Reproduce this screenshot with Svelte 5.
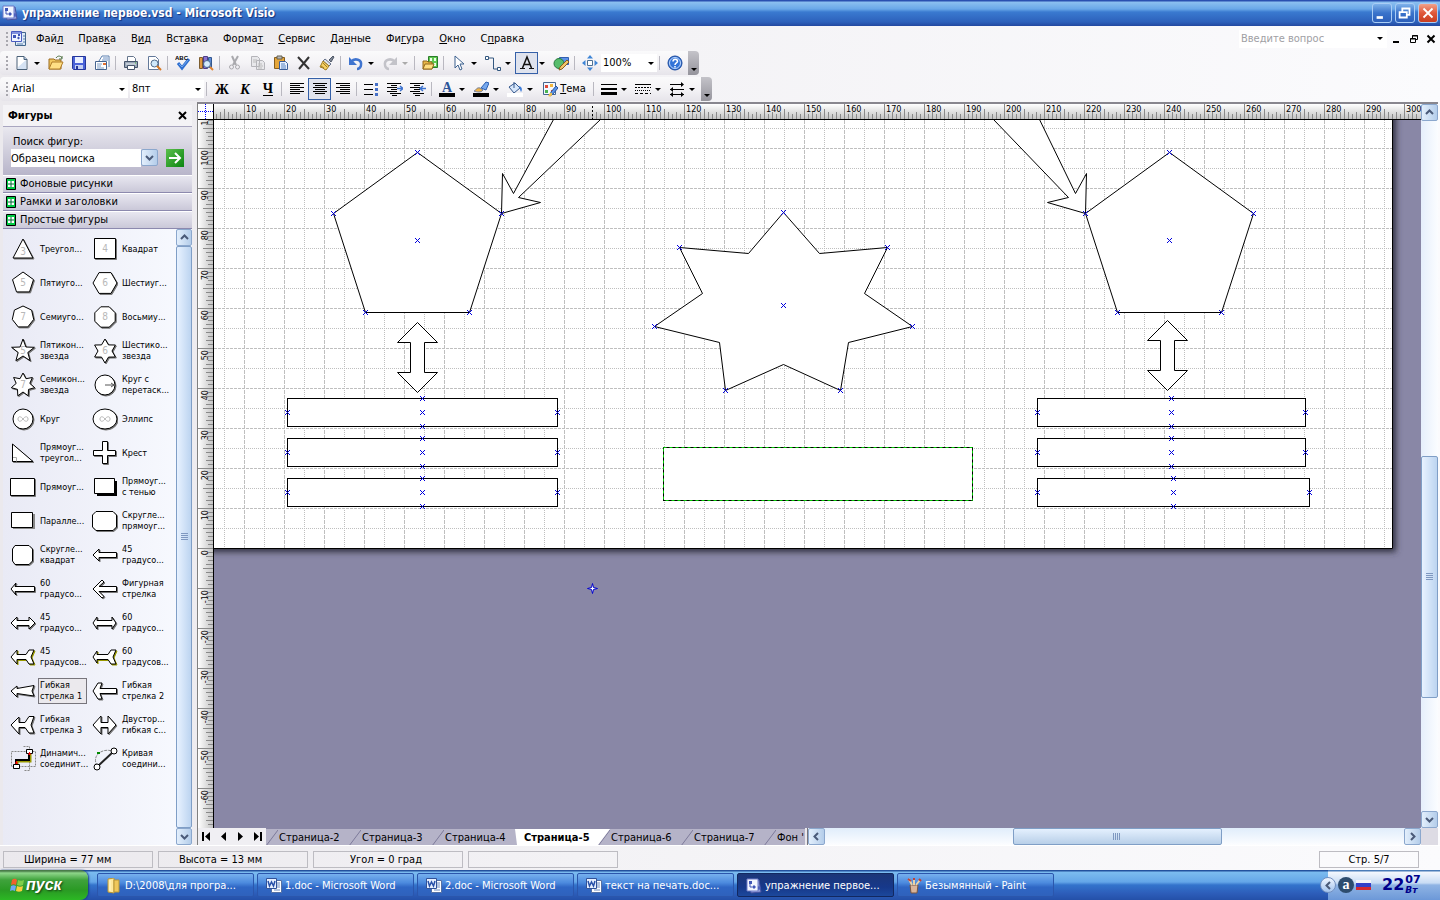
<script lang="ts">
  const menus = [
    ['Фай', 'л', ''], ['Прав', 'к', 'а'], ['В', 'и', 'д'], ['Вст', 'а', 'вка'], ['Форма', 'т', ''],
    ['', 'С', 'ервис'], ['Да', 'н', 'ные'], ['Фи', 'г', 'ура'], ['', 'О', 'кно'], ['С', 'п', 'равка'],
  ];

  type Tool = { icon?: string; label?: string; drop?: boolean; on?: boolean; off?: boolean; sep?: boolean };
  const sep: Tool = { sep: true };

  const standard: Tool[] = [
    { icon: 'new', label: 'Создать', drop: true },
    { icon: 'open', label: 'Открыть' },
    { icon: 'save', label: 'Сохранить' },
    { icon: 'mail', label: 'Сообщение' },
    sep,
    { icon: 'print', label: 'Печать' },
    { icon: 'preview', label: 'Просмотр' },
    sep,
    { icon: 'spell', label: 'Орфография' },
    { icon: 'research', label: 'Справочники' },
    sep,
    { icon: 'cut', label: 'Вырезать', off: true },
    { icon: 'copy', label: 'Копировать', off: true },
    { icon: 'paste', label: 'Вставить' },
    { icon: 'delete', label: 'Удалить' },
    { icon: 'painter', label: 'Формат по образцу' },
    sep,
    { icon: 'undo', label: 'Отменить', drop: true },
    { icon: 'redo', label: 'Вернуть', drop: true, off: true },
    sep,
    { icon: 'stencil', label: 'Фигуры' },
    sep,
    { icon: 'pointer', label: 'Указатель', drop: true },
    { icon: 'connector', label: 'Соединительная линия', drop: true },
    { icon: 'text', label: 'Текст', drop: true, on: true },
    { icon: 'drawing', label: 'Рисование' },
    sep,
    { icon: 'fit', label: 'Панорама' },
  ];

  const formatting: Tool[] = [
    { icon: 'bold', label: 'Полужирный' },
    { icon: 'italic', label: 'Курсив' },
    { icon: 'underline', label: 'Подчеркнутый' },
    sep,
    { icon: 'left', label: 'По левому краю' },
    { icon: 'center', label: 'По центру', on: true },
    { icon: 'right', label: 'По правому краю' },
    sep,
    { icon: 'bullets', label: 'Маркеры' },
    { icon: 'outdent', label: 'Уменьшить отступ' },
    { icon: 'indent', label: 'Увеличить отступ' },
    sep,
    { icon: 'color', label: 'Цвет текста', drop: true },
    { icon: 'line', label: 'Цвет линии', drop: true },
    { icon: 'fill', label: 'Цвет заливки', drop: true },
  ];

  const lineTools: Tool[] = [
    sep,
    { icon: 'weight', label: 'Толщина линии', drop: true },
    { icon: 'pattern', label: 'Тип линии', drop: true },
    { icon: 'ends', label: 'Концы линии', drop: true },
  ];

  const icons: Record<string, string> = {
    new: '<path d="M3 1.500h7l3 3v10H3z" fill="#fff" stroke="#4a6078"/><path d="M4 12l8-7v9H4z" fill="#d5e2f3"/><path d="M10 1.500v3h3" fill="#b9cce6" stroke="#4a6078"/>',
    open: '<path d="M1 4h5l1 1h6v9H1z" fill="#f2c860" stroke="#9a6a20"/><path d="M1 14l3-7h11l-3 7z" fill="#ffdf85" stroke="#b07c28"/><path d="M8 3c2-3 5-2 6 0m0-2v3h-3" fill="none" stroke="#4c7040"/>',
    save: '<path d="M1.500 1.500h13v13h-12l-1-1z" fill="#4a62d8" stroke="#24369a"/><path d="M4 2h8v6H4z" fill="#eaf0ff"/><path d="M4 10h8v4H4z" fill="#c4cff2"/><path d="M5 11h2v3H5z" fill="#24369a"/>',
    mail: '<path d="M5 6l3-5h7v11" fill="#fff" stroke="#5c80b0"/><path d="M9 3h5M8 5h6" stroke="#6c90c4"/><path d="M1.500 6.500h11v8h-11z" fill="#fff" stroke="#46648f"/><path d="M3 9h5M3 11h4M3 13h7" fill="none" stroke="#7d9cc6"/><path d="M9 8h3v2H9z" fill="#e26f30"/>',
    print: '<path d="M4.500 1.500h6l2 2v3h-8z" fill="#fff" stroke="#65758c"/><path d="M1.500 6.500h13v6h-13z" fill="#9ba8b8" stroke="#46546b"/><path d="M3 9h10" stroke="#e8edf4"/><path d="M4.500 10.500h7v4h-7z" fill="#fff" stroke="#46546b"/><path d="M12 8h1" stroke="#42c040"/>',
    preview: '<path d="M2.500 1.500h7l3 3v10h-10z" fill="#fff" stroke="#63799a"/><circle cx="8.500" cy="8.500" r="3.500" fill="#cfe8fa" stroke="#516c8c"/><path d="M11 11l4 4" stroke="#d87822" stroke-width="2"/>',
    spell: '<path d="M3 8l4 5 7-9" fill="none" stroke="#2f6fd0" stroke-width="3"/><path d="M4 9l3 3 6-7" fill="none" stroke="#75a9ee"/><text x="0" y="5" class="tiny">ABC</text>',
    research: '<path d="M1.500 2.500h3v11h-3z" fill="#e19a40" stroke="#7c5d30"/><path d="M5.500 1.500h4v12h-4z" fill="#8c74d0" stroke="#4d3f88"/><path d="M10.500 2.500h3v10h-3z" fill="#5a8bd8" stroke="#34588f"/><circle cx="9" cy="9" r="3.500" fill="#d5edfc" stroke="#45658f"/><path d="M12 12l3 3" stroke="#e08430" stroke-width="2"/>',
    cut: '<path d="M5 1l4 9M11 1L6 10" stroke="#a9a9ad" stroke-width="2"/><circle cx="4.500" cy="12" r="2" fill="none" stroke="#a9a9ad"/><circle cx="10.500" cy="12" r="2" fill="none" stroke="#a9a9ad"/>',
    copy: '<path d="M1.500 1.500h6l2 2v8h-8zM6.500 5.500h6l2 2v7h-8z" fill="#e8e8eb" stroke="#b4b4b9"/><path d="M3 5h4M3 7h3M8 9h4M8 11h5M8 13h4" stroke="#bbb"/>',
    paste: '<path d="M1.500 2.500h10v11h-10z" fill="#e5a63a" stroke="#855e20"/><path d="M4 1h5v3H4z" fill="#b8b8b8" stroke="#65604f"/><path d="M6.500 6.500h6l2 2v6h-8z" fill="#e8f1ff" stroke="#3a5d98"/><path d="M8 9h4M8 11h5M8 13h5" stroke="#5480c0"/>',
    delete: '<path d="M2 2l11 12M13 2L3 14" stroke="#333" stroke-width="2"/>',
    painter: '<path d="M10 5l4-4 1 1-3 5z" fill="#7f8794" stroke="#4f5868"/><path d="M6 4l6 5-2 2-6-5z" fill="#dfe3ea" stroke="#66728a"/><path d="M4 6l6 5-3 4-2-1-1-1-3-1z" fill="#f4cf62" stroke="#a07c22"/><path d="M2 11l3 2M4 8l4 4" stroke="#a07c22"/>',
    undo: '<path d="M3 7c4-5 11-2 10 3 0 2-2 4-4 4" fill="none" stroke="#3f74cf" stroke-width="2.500"/><path d="M1 2v8h8z" fill="#3f74cf"/>',
    redo: '<path d="M13 7c-4-5-11-2-10 3 0 2 2 4 4 4" fill="none" stroke="#c3c3c9" stroke-width="2.500"/><path d="M15 2v8H7z" fill="#c3c3c9"/>',
    stencil: '<path d="M6.500 1.500h9v11h-9z" fill="#61c850" stroke="#2b7c2b"/><path d="M8 3h2v3H8zM12 3h2v3h-2zM12 8h2v3h-2z" fill="#eaffe5"/><path d="M1 6h4l1 1h4v7H1z" fill="#e9b84a" stroke="#93681c"/><path d="M1 14l2-5h9l-2 5z" fill="#ffdd80" stroke="#93681c"/>',
    pointer: '<path d="M4 1v12l3-3 2 5 2-1-2-5h4z" fill="#fff" stroke="#3c618f"/>',
    connector: '<path d="M.5 1.500h3v3h-3zM12.500 12.500h3v3h-3z" fill="#fff" stroke="#33577f"/><path d="M4 3h4.500v11H12" fill="none" stroke="#33577f"/>',
    text: '<path d="M3.500 13L8 2l4.500 11M5 9.500h6" fill="none" stroke="#111" stroke-width="1.500"/><path d="M1 13.500h5M10 13.500h5" stroke="#111"/>',
    drawing: '<path d="M6.500 2.500h9v7h-9z" fill="#5d91e8" stroke="#315fb0"/><circle cx="6" cy="8.500" r="5" fill="#57bd6c" stroke="#287940"/><path d="M6 15l1-3 7-7 2 2-7 7z" fill="#f1c56a" stroke="#875d20"/>',
    fit: '<path d="M5.500 5.500h5v5h-5z" fill="#fff" stroke="#4f7193"/><path d="M8 0L5 3.500h6zM8 16l-3-3.500h6zM0 8l3.500-3v6zM16 8l-3.500-3v6z" fill="#3f86d6"/>',
    help: '<circle cx="8" cy="8" r="7" fill="#3374d8" stroke="#1c4a9c"/><circle cx="8" cy="8" r="5.500" fill="none" stroke="#bcd6fb"/><path d="M6 6.500c0-3 4.500-3 4.500 0 0 1.500-2.500 1.500-2.500 3.500M8 11v1.500" fill="none" stroke="#fff" stroke-width="1.500"/>',
    bold: '<text x="8" y="13" class="glyph heavy">Ж</text>',
    italic: '<text x="8" y="13" class="glyph heavy slant">К</text>',
    underline: '<text x="8" y="12" class="glyph heavy">Ч</text><path d="M3 14.500h10" stroke="#000"/>',
    left: '<path d="M1 2.500h14M1 4.500h10M1 6.500h14M1 8.500h10M1 10.500h14M1 12.500h10" stroke="#000"/>',
    center: '<path d="M1 2.500h14M3 4.500h10M1 6.500h14M3 8.500h10M1 10.500h14M3 12.500h10" stroke="#000"/>',
    right: '<path d="M1 2.500h14M5 4.500h10M1 6.500h14M5 8.500h10M1 10.500h14M5 12.500h10" stroke="#000"/>',
    bullets: '<path d="M0 3.500h9M0 8.500h9M0 13.500h9" stroke="#000"/><path d="M11 2h3v3h-3zM11 7h3v3h-3zM11 12h3v3h-3z" fill="#4670c8"/>',
    outdent: '<path d="M0 2.500h14M4 4.500h6M0 6.500h10M4 8.500h6M0 10.500h10M3 12.500h11M5 14.500h5" stroke="#000"/><path d="M10 7.500h5M13 5l3 2.500-3 2.500" fill="none" stroke="#3f74cf" stroke-width="1.500"/>',
    indent: '<path d="M0 2.500h14M4 4.500h6M0 6.500h10M4 8.500h6M0 10.500h10M3 12.500h11M5 14.500h5" stroke="#000"/><path d="M11 7.500h5M13 5l-3 2.500 3 2.500" fill="none" stroke="#3f74cf" stroke-width="1.500"/>',
    color: '<text x="8" y="11" class="glyph heavy blue">А</text><path d="M0 12h16v4H0z"/>',
    line: '<path d="M8 7l5-6 3 1-3 7z" fill="#76a8ee" stroke="#2a5db0"/><path d="M1 10c2 0 2-4 6-3l3 2c-2 3-6 2-9 1z" fill="#eeb24a" stroke="#6f7fa0"/><path d="M0 12h16v4H0z"/>',
    fill: '<path d="M2 6l6-4 5 5-6 5z" fill="#d7e7fb" stroke="#36588c"/><path d="M7 1v6" stroke="#36588c"/><path d="M12 5c4 1 3 5 2 6-1-2-1-3-2-6z" fill="#3f7edb"/><path d="M0 12h16v4H0z" fill="#fff"/>',
    theme: '<path d="M1.500 1.500h12v12h-12z" fill="#f4f8ff" stroke="#47668f"/><path d="M3 4h3v3H3zM9 9h3v3H9z" fill="#e04a3a"/><path d="M8 3h3v3H8z" fill="#f3b73c"/><path d="M3 9h3v3H3z" fill="#4ab552"/><path d="M8 15l1-4 5-6 2 2-5 6z" fill="#5c94e8" stroke="#29549e"/><path d="M6 15c1 0 1-4 4-3 1 3-2 4-4 3z" fill="#f0c24f"/>',
    weight: '<path d="M0 3.500h16" stroke="#000"/><path d="M0 8h16" stroke="#000" stroke-width="2"/><path d="M0 12.500h16" stroke="#000" stroke-width="3"/>',
    pattern: '<path d="M0 3.500h16" stroke="#000"/><path d="M0 6.500h16" stroke="#000" stroke-dasharray="2 1"/><path d="M0 9.500h16" stroke="#000" stroke-dasharray="1 1"/><path d="M0 12.500h16" stroke="#000" stroke-dasharray="3 2"/>',
    ends: '<path d="M1 3.500h13M1 8.500h14M1 13.500h14" stroke="#000"/><path d="M12 1v5l3-2.500zM4 6v5L1 8.500zM4 11v5l-3-2.500zM12 11v5l3-2.500z"/>',
    folder: '<path d="M2 1l6-1v15l-6-1z" fill="#ffe89b" stroke="#b99636"/><path d="M8 2h5v12H8z" fill="#efc75b" stroke="#b99636"/><path d="M4 2v11" stroke="#fff6ca"/>',
    word: '<path d="M5.500 2.500h10v12h-10z" fill="#fff" stroke="#5570a4"/><path d="M10 5h4M10 7h4M10 9h4M8 12h6" stroke="#6c8ac0"/><path d="M.5.500h10v10H.5z" fill="#e8f0ff" stroke="#305299"/><path d="M2 3l1.500 5L5.500 4l2 4L9 3" fill="none" stroke="#2750a8" stroke-width="1.500"/>',
    doc: '<path d="M4.500 1.500h10v13h-10z" fill="#dfeaf8" stroke="#41658c"/><path d="M12 5h2M12 8h2M12 11h2M6 13h6" stroke="#5d80ac"/><path d="M.5.500h10v10H.5z" fill="#f2f5ff" stroke="#4a5bc0"/><path d="M1 1h9v2H1z" fill="#8493de"/><path d="M2 4h3v3H2zM7 3h2v2H7zM6 7l1.500-1.500L9 7 7.500 8.500z" fill="#3f55b7"/>',
    visio: '<path d="M3 4l10-2 2 12-10 1z" fill="#97a2dc" stroke="#4552a0"/><path d="M1 1h11v12H1z" fill="#f2f5ff" stroke="#6c7bc8"/><path d="M3 3h3v3H3z" fill="#3f55b7"/><path d="M8 7l2 2-2 2-2-2z" fill="#3f55b7"/><path d="M4 6v3h2M12 10h3M13 8v4" fill="none" stroke="#3f55b7"/>',
    paint: '<path d="M4 7h8l-1 8H5z" fill="#d8b49a" stroke="#775540"/><path d="M6 7L3 1M8 7V1M10 7l4-5" stroke="#e8d2a8" stroke-width="2"/><path d="M2 1l3 2M7 1h2M13 1l2 2" stroke="#c44235" stroke-width="2"/>',
  };

  // stencil masters, drawn in a 26x26 box
  const solid = (d: string, shade = '#777') => `<path d="${d}" transform="translate(1 1)" stroke="${shade}" fill="${shade}"/><path d="${d}" fill="#fff" stroke="#000"/>`;
  const num = (n: string, y = 16) => `<text x="13" y="${y}" class="num">${n}</text>`;
  const loop = '<path d="M13 13c-2-3-5-3-5 0s3 3 5 0 5-3 5 0-3 3-5 0" fill="none" stroke="#b8b8b8"/>';
  const poly = (n: number, r: number, inner = 0, rot = -90) => {
    const count = inner ? n * 2 : n;
    let d = '';
    for (let i = 0; i < count; i++) {
      const a = ((rot + (360 / count) * i) * Math.PI) / 180;
      const rad = inner && i % 2 ? inner : r;
      d += `${i ? 'L' : 'M'}${(13 + rad * Math.cos(a)).toFixed(1)} ${(13 + rad * Math.sin(a)).toFixed(1)}`;
    }
    return d + 'z';
  };

  const masters = [
    { name: ['Треугол...'], art: solid('M13 3L23 22H3z') + num('3', 19) },
    { name: ['Квадрат'], art: solid('M2.500 2.500h21v20h-21z') + num('4') },
    { name: ['Пятиуго...'], art: solid(poly(5, 11)) + num('5') },
    { name: ['Шестиуг...'], art: solid(poly(6, 12, 0, 0)) + num('6') },
    { name: ['Семиуго...'], art: solid(poly(7, 11)) + num('7') },
    { name: ['Восьмиу...'], art: solid(poly(8, 11, 0, 22.5)) + num('8') },
    { name: ['Пятикон...', 'звезда'], art: solid(poly(5, 12, 5)) + num('5') },
    { name: ['Шестико...', 'звезда'], art: solid(poly(6, 12, 7)) + num('6') },
    { name: ['Семикон...', 'звезда'], art: solid(poly(7, 12, 7)) + num('7') },
    { name: ['Круг с', 'перетаск...'], art: solid('M3 13a10 10 0 1 0 20 0a10 10 0 1 0-20 0z') + '<path d="M13 13h9M19 11l3 2-3 2" fill="none" stroke="#555"/>' },
    { name: ['Круг'], art: solid('M3 13a10 10 0 1 0 20 0a10 10 0 1 0-20 0z') + loop },
    { name: ['Эллипс'], art: solid('M1 13a12 10 0 1 0 24 0a12 10 0 1 0-24 0z') + loop },
    { name: ['Прямоуг...', 'треугол...'], art: solid('M2.500 4v17.500H23z') + '<path d="M3 17.500h3.500v4" fill="none" stroke="#aaa"/>' },
    { name: ['Крест'], art: solid('M10.500 1.500h5v9h8v5h-8v8h-5v-8h-9v-5h9z') },
    { name: ['Прямоуг...'], art: solid('M.5 4.500h24v17H.5z') },
    { name: ['Прямоуг...', 'с тенью'], art: '<path d="M5 7h20v15H5z" fill="#000"/><path d="M2.500 4.500h20v15h-20z" fill="#fff" stroke="#000"/>' },
    { name: ['Паралле...'], art: '<path d="M3 6h22v15H3z" fill="#888"/><path d="M1.500 4.500h21v15h-21z" fill="#fff" stroke="#000"/>' },
    { name: ['Скругле...', 'прямоуг...'], art: solid('M4 3.500h17l3.500 3.500v12L21 22.500H4L.5 19V7z') },
    { name: ['Скругле...', 'квадрат'], art: solid('M5 3.500h14l3.500 3.500v12l-3.500 3.500H5L2.500 19V7z') },
    { name: ['45', 'градусо...'], art: solid('M1 13l6-6v3.500h17.500v5H7V19z') },
    { name: ['60', 'градусо...'], art: solid('M1 13l5-6-1 3.500h19.500v5H5l1 3.500z') },
    { name: ['Фигурная', 'стрелка'], art: solid('M1 13l9-9 2 2-5 4.500h17.500v5H7l5 5-2 1.500z') },
    { name: ['45', 'градусо...'], art: solid('M1 13l6-6v3.500h12V7l6 6-6 6v-3.500H7V19z') },
    { name: ['60', 'градусо...'], art: solid('M1 13l4-6v3.500h15V7l4 6-4 6v-3.500H5V19z') },
    { name: ['45', 'градусов...'], art: solid('M1 13l6-7v4.500h9l3-4.500h5l-3 7 3 7h-5l-3-4.500H7V20z', '#990') },
    { name: ['60', 'градусов...'], art: solid('M1 13l4-6v3.500h11l3-4.500h5l-3 7 3 7h-5l-3-4.500H5V19z', '#990') },
    { name: ['Гибкая', 'стрелка 1'], art: solid('M1 13l6-5v2.500l17-3-2 5.500 2 5-17-2.500V19z'), on: true },
    { name: ['Гибкая', 'стрелка 2'], art: solid('M1 13l5-8h4l-2 5.500h16.500v5H8l2 5.500H6z') },
    { name: ['Гибкая', 'стрелка 3'], art: solid('M1 13l8-8v5.500h6l4-6h5l-3 8.500 3 8h-5l-4-5.500H9V22z') },
    { name: ['Двустор...', 'гибкая с...'], art: solid('M1 13l8-9v6.500h7V4l8 9-8 9v-6.500H9V22z') },
    { name: ['Динамич...', 'соединит...'], art: '<path d="M1.500 5.500h24v15h-24zM13.500.500h6v24h-6" fill="none" stroke="#888" stroke-dasharray="2 1"/><path d="M7 21v-6h13V8" fill="none" stroke="#990" stroke-width="3"/><path d="M6 20v-6h13V7" fill="none" stroke="#000" stroke-width="2"/><path d="M16.500 3.500h6v4h-6zM3.500 18.500h6v4h-6z" fill="#fff" stroke="#000"/><path d="M18 8h3M19.500 6v3M5 17h3M6.500 15v3" stroke="red"/>' },
    { name: ['Кривая', 'соедини...'], art: '<path d="M5 20C-1 8 12 2 20 5" fill="none" stroke="#888" stroke-dasharray="3 1"/><path d="M6 20L21 6" stroke="#222" stroke-width="2"/><circle cx="22" cy="5" r="3" fill="#fff" stroke="#000"/><circle cx="5" cy="21" r="3" fill="#fff" stroke="#000"/><path d="M5 6h3v2H5z" fill="#080"/>' },
  ];

  const stencils = ['Фоновые рисунки', 'Рамки и заголовки', 'Простые фигуры'];
  const pages = ['Страница-2', 'Страница-3', 'Страница-4', 'Страница-5', 'Страница-6', 'Страница-7', "Фон '"];
  const status = ['Ширина = 77 мм', 'Высота = 13 мм', 'Угол = 0 град', ''];
  const tasks = [
    { icon: 'folder', text: 'D:\\2008\\для програ...' },
    { icon: 'word', text: '1.doc - Microsoft Word' },
    { icon: 'word', text: '2.doc - Microsoft Word' },
    { icon: 'word', text: 'текст на печать.doc...' },
    { icon: 'visio', text: 'упражнение первое...', on: true },
    { icon: 'paint', text: 'Безымянный - Paint' },
  ];

  let active = $state('Страница-5');
  let search = $state('Образец поиска');

  // rulers: 4px per millimetre, zero of the sheet lies at (-10, 428) of the canvas
  const hTicks = Array.from({ length: 304 }, (_, i) => ({ v: i, at: i * 4 - 10 })).filter((t) => t.at > 0);
  const vTicks = Array.from({ length: 180 }, (_, i) => ({ v: 110 - i, at: i * 4 - 12 }));
  const tickLength = (v: number) => (v % 10 === 0 ? 16 : v % 5 === 0 ? 11 : v % 2 === 0 ? 8 : 6);

  const gridX = Array.from({ length: 59 }, (_, i) => 10 + i * 20 + 0.5);
  const gridY = Array.from({ length: 21 }, (_, i) => 8 + i * 20 + 0.5);

  const pentagon = [[0, 0], [84, 61], [52, 160], [-52, 160], [-84, 61]];
  const star = [
    [569, 92], [605, 133], [673, 127], [650, 173], [698, 206], [634, 222], [626, 270],
    [569, 244], [511, 270], [505, 222], [440, 206], [488, 173], [465, 127], [534, 133],
  ];
  const bars = [
    { x: 73, y: 278, w: 270 }, { x: 73, y: 318, w: 270 }, { x: 73, y: 358, w: 270 },
    { x: 823, y: 278, w: 268 }, { x: 823, y: 318, w: 268 }, { x: 823, y: 358, w: 272 },
  ];
  const join = (points: number[][], dx = 0, dy = 0) => points.map(([x, y]) => `${x + dx},${y + dy}`).join(' ');

  // connection points, on the outer tips only
  const marks = [
    ...[203, 955].flatMap((cx) => [...pentagon.map(([x, y]) => [x + cx, y + 32]), [cx, 120]]),
    ...star.filter((_, i) => i % 2 === 0),
    [569, 185],
    ...bars.flatMap(({ x, y, w }) => [
      [x, y + 14], [x + w, y + 14], [x + w / 2, y], [x + w / 2, y + 14], [x + w / 2, y + 28],
    ]),
  ];
</script>

{#snippet icon(name: string)}
  <svg class="icon" viewBox="0 0 16 16" aria-hidden="true">{@html icons[name]}</svg>
{/snippet}

{#snippet tools(items: Tool[])}
  {#each items as t}
    {#if t.sep}
      <span class="sep"></span>
    {:else}
      <button class="tool" class:on={t.on} disabled={t.off} aria-label={t.label}>{@render icon(t.icon ?? '')}</button>
      {#if t.drop}
        <button class="drop" disabled={t.off} aria-label={t.label}><i class="caret"></i></button>
      {/if}
    {/if}
  {/each}
{/snippet}

{#snippet chevron(dir: string)}
  <svg class="chevron {dir}" viewBox="0 0 9 9" aria-hidden="true"><path d="M1 6l3.500-3.500L8 6" /></svg>
{/snippet}

<div class="app">
  <header class="title">
    {@render icon('visio')}
    <h1>упражнение первое.vsd - Microsoft Visio</h1>
    <div class="title-buttons">
      <button aria-label="Свернуть"><svg viewBox="0 0 20 20"><path d="M4 15h7" stroke-width="3" /></svg></button>
      <button aria-label="Восстановить"><svg viewBox="0 0 20 20"><path d="M4 9h8v6H4zM7 8V5h8v7h-3" /></svg></button>
      <button class="close" aria-label="Закрыть"><svg viewBox="0 0 20 20"><path d="M5 5l10 10M15 5L5 15" /></svg></button>
    </div>
  </header>

  <nav class="menu">
    <span class="grip"></span>
    {@render icon('doc')}
    {#each menus as [before, key, after]}
      <button>{before}<u>{key}</u>{after}</button>
    {/each}
    <div class="ask">
      <input placeholder="Введите вопрос" aria-label="Введите вопрос" />
      <button class="drop" aria-label="Список вопросов"><i class="caret"></i></button>
    </div>
    <div class="child-buttons">
      <button aria-label="Свернуть окно"><svg viewBox="0 0 10 10"><path d="M1 8h6" stroke-width="2" /></svg></button>
      <button aria-label="Восстановить окно"><svg viewBox="0 0 10 10"><path d="M1.500 4.500h5v4h-5zM1 5h6M3.500 4V1.500h5v4H7M3 2h6" /></svg></button>
      <button aria-label="Закрыть окно"><svg viewBox="0 0 10 10"><path d="M1.500 1.500l7 7M8.500 1.500l-7 7" stroke-width="2" /></svg></button>
    </div>
  </nav>

  <div class="toolbar">
    <span class="grip"></span>
    {@render tools(standard)}
    <label class="combo zoom">
      <select aria-label="Масштаб"><option>100%</option></select>
      <i class="caret"></i>
    </label>
    <span class="sep"></span>
    <button class="tool" aria-label="Справка">{@render icon('help')}</button>
    <button class="more" aria-label="Параметры панели"><i class="caret"></i></button>
  </div>

  <div class="toolbar">
    <span class="grip"></span>
    <label class="combo font">
      <select aria-label="Шрифт"><option>Arial</option></select>
      <i class="caret"></i>
    </label>
    <label class="combo size">
      <select aria-label="Размер шрифта"><option>8пт</option></select>
      <i class="caret"></i>
    </label>
    <span class="sep"></span>
    {@render tools(formatting)}
    <button class="tool theme">{@render icon('theme')}<span><u>Т</u>ема</span></button>
    {@render tools(lineTools)}
    <button class="more" aria-label="Параметры панели"><i class="caret"></i></button>
  </div>

  <main class="workspace">
    <aside class="shapes">
      <div class="shapes-head">
        <h2>Фигуры</h2>
        <button aria-label="Закрыть"><svg viewBox="0 0 9 9"><path d="M1 1l7 7M8 1L1 8" /></svg></button>
      </div>
      <form class="search" onsubmit={(e) => e.preventDefault()}>
        <label for="search">Поиск фигур:</label>
        <div class="search-row">
          <input id="search" bind:value={search} />
          <button type="button" class="xp" aria-label="Показать список">{@render chevron('down')}</button>
          <button class="go" aria-label="Найти"><svg viewBox="0 0 18 18"><path d="M3 9h11M9 4l5 5-5 5" /></svg></button>
        </div>
      </form>
      {#each stencils as s}
        <button class="stencil">
          <svg viewBox="0 0 10 12" aria-hidden="true"><path d="M.5.500h9v11h-9z" fill="#0c4" stroke="#000" /><path d="M2 3h6v6H2z" fill="#fff" /><path d="M5 3v6M2 6h6" stroke="#063" /></svg>
          {s}
        </button>
      {/each}
      <div class="shapes-body">
        <ul class="masters">
          {#each masters as m}
            <li class:on={m.on}>
              <svg viewBox="0 0 26 26" aria-hidden="true">{@html m.art}</svg>
              <span>{#each m.name as part, i}{#if i}<br />{/if}{part}{/each}</span>
            </li>
          {/each}
        </ul>
        <div class="scroll vertical">
          <button class="xp" aria-label="Вверх">{@render chevron('up')}</button>
          <div class="track"><div class="thumb whole"></div></div>
          <button class="xp" aria-label="Вниз">{@render chevron('down')}</button>
        </div>
      </div>
    </aside>

    <section class="drawing">
      <svg class="corner" aria-hidden="true"><path d="M0 7.500h15M7.500 0v15" stroke="#00f" stroke-dasharray="1 1" /></svg>
      <svg class="ruler top" aria-hidden="true">
        <defs>
          <linearGradient id="rule-top" x2="0" y2="1"><stop stop-color="#fff" /><stop offset="1" stop-color="#c4c4c4" /></linearGradient>
        </defs>
        <rect width="100%" height="100%" fill="url(#rule-top)" />
        {#each hTicks as { v, at }}
          <path d="M{at + 0.5} 16v-{tickLength(v)}" />
          {#if v % 10 === 0}<text x={at + 2} y="8">{v}</text>{/if}
        {/each}
        <path class="cursor-tick" d="M378.500 2v13" />
      </svg>
      <div class="scroll vertical main-scroll">
        <button class="xp" aria-label="Вверх">{@render chevron('up')}</button>
        <div class="track"><div class="before"></div><div class="thumb page"></div><div class="after"></div></div>
        <button class="xp" aria-label="Вниз">{@render chevron('down')}</button>
      </div>
      <svg class="ruler side" aria-hidden="true">
        <defs>
          <linearGradient id="rule-side"><stop stop-color="#fff" /><stop offset="1" stop-color="#c4c4c4" /></linearGradient>
        </defs>
        <rect width="100%" height="100%" fill="url(#rule-side)" />
        {#each vTicks as { v, at }}
          <path d="M16 {at + 0.5}h-{tickLength(v)}" />
          {#if v % 10 === 0}<text transform="translate(10 {at + 2}) rotate(-90)" text-anchor="end">{v}</text>{/if}
        {/each}
      </svg>
      <svg class="canvas" role="img" aria-label="Чертеж">
        <defs>
          <filter id="soft" x="-5%" y="-5%" width="110%" height="110%"><feGaussianBlur stdDeviation="3" /></filter>
        </defs>
        <path d="M-20-20H1182V432H-20z" fill="#33313f" filter="url(#soft)" />
        <path d="M-1-1H1178.500V428.500H-1z" fill="#fff" stroke="#000" />
        <g class="grid">
          {#each gridX as x, i}
            <path d="M{x} 0V428" stroke-dasharray={i % 2 ? '4 1' : '1 1'} />
          {/each}
          {#each gridY as y, i}
            <path d="M0 {y}H1178" stroke-dasharray={i % 2 ? '3 1' : '1 1'} />
          {/each}
        </g>
        <g class="figures" transform="translate(.5 .5)">
          <polygon points={join(pentagon, 203, 32)} />
          <polygon points={join(pentagon, 955, 32)} />
          <path d="M339-1L299 73 288 53 287 93 326 82 304 77 386-1M779-1L854 77 833 82 871 93 872 53 861 73 825-1" />
          {#each [[203, 202], [953, 200]] as [x, y]}
            <path d="M{x} {y}l20 20h-13v30h13l-20 20-20-20h13v-30h-13z" />
          {/each}
          <polygon points={join(star)} />
          {#each bars as b}
            <rect x={b.x} y={b.y} width={b.w} height="28" />
          {/each}
          <rect x="449" y="327" width="309" height="53" />
          <rect class="selected" x="449" y="327" width="309" height="53" />
        </g>
        {#each marks as [x, y]}
          <path class="mark" d="M{x - 2} {y - 2}l5 5m0-5l-5 5" />
        {/each}
        <path d="M378.500 463.500l1 4 4 1-4 1-1 4-1-4-4-1 4-1z" fill="#fff" stroke="#00c" />
      </svg>
      <div class="tabs">
        <div class="tab-nav">
          <button aria-label="Первая"><svg viewBox="0 0 9 9"><path d="M0 0h2v9H0zM8 0v9L3 4.500z" /></svg></button>
          <button aria-label="Назад"><svg viewBox="0 0 9 9"><path d="M7 0v9L2 4.500z" /></svg></button>
          <button aria-label="Вперед"><svg viewBox="0 0 9 9"><path d="M2 0v9l5-4.500z" /></svg></button>
          <button aria-label="Последняя"><svg viewBox="0 0 9 9"><path d="M7 0h2v9H7zM1 0v9l5-4.500z" /></svg></button>
        </div>
        <div class="tab-list">
          {#each pages as p}
            <button class="tab" class:active={p === active} onclick={() => (active = p)}>
              <svg viewBox="0 0 12 17" aria-hidden="true"><path d="M0 17L12 1" /></svg>
              <span>{p}</span>
            </button>
          {/each}
        </div>
        <span class="splitter"></span>
        <div class="scroll horizontal">
          <button class="xp" aria-label="Влево">{@render chevron('left')}</button>
          <div class="track"><div class="before"></div><div class="thumb wide"></div><div class="after"></div></div>
          <button class="xp" aria-label="Вправо">{@render chevron('right')}</button>
        </div>
      </div>
    </section>
  </main>

  <div class="status">
    {#each status as s}
      <span class="cell">{s}</span>
    {/each}
    <span class="cell page-no">Стр. 5/7</span>
  </div>

  <footer class="taskbar">
    <button class="start">
      <svg viewBox="0 0 16 16" aria-hidden="true">
        <path d="M2 3c2-2 4-1 5 0L6 8C4 7 3 7 1 8z" fill="#f2602c" /><path d="M8 3c2 1 4 1 6 0l-1 5c-2 1-4 1-6 0z" fill="#7ed04a" />
        <path d="M1 9c2-1 3-1 5 0l-1 5c-2-1-3-1-5 0z" fill="#6fa6f8" /><path d="M7 9c2 1 4 1 6 0l-1 5c-2 1-4 1-6 0z" fill="#f8cf3e" />
      </svg>
      пуск
    </button>
    {#each tasks as t}
      <button class="task" class:on={t.on}>{@render icon(t.icon)}<span>{t.text}</span></button>
    {/each}
    <div class="tray">
      <button class="hide" aria-label="Скрыть значки">{@render chevron('left')}</button>
      <span class="agent">a</span>
      <svg class="flag" viewBox="0 0 15 12" aria-hidden="true"><path d="M0 1h15v4H0z" fill="#f4f4f8" /><path d="M0 4h15v4H0z" fill="#3440c8" /><path d="M0 8h15v3H0z" fill="#d42a30" /></svg>
      <time>
        <b>22</b>
        <span><b>07</b><i>Вт</i></span>
      </time>
    </div>
  </footer>
</div>

<style>
  :global(body) {
    margin: 0;
  }

  .app {
    background: linear-gradient(90deg, #ebe9ed, #f3f2f5 40%, #fbfbfd);
    color: #000;
    display: flex;
    flex-direction: column;
    font: 11px/14px 'DejaVu Sans Condensed', 'Liberation Sans', sans-serif;
    min-height: 100vh;
    overflow: hidden;
  }

  button,
  input,
  select {
    background: none;
    border: 0;
    border-radius: 0;
    box-sizing: border-box;
    color: inherit;
    font: inherit;
    margin: 0;
    padding: 0;
  }

  h1,
  h2,
  ul {
    margin: 0;
    padding: 0;
  }

  svg {
    display: block;
    fill: none;
    flex: none;
  }

  .icon {
    fill: #000;
    height: 16px;
    width: 16px;
  }

  .icon :global(.tiny) {
    font: bold 6px 'Liberation Sans', sans-serif;
  }

  .icon :global(.glyph) {
    font: 14px 'Liberation Serif', serif;
    text-anchor: middle;
  }

  .icon :global(.heavy) {
    font-weight: bold;
  }

  .icon :global(.slant) {
    font-style: italic;
  }

  .icon :global(.blue) {
    fill: #2c5498;
  }

  .caret {
    border: 3px solid transparent;
    border-bottom: 0;
    border-top-color: #000;
    height: 0;
    width: 0;
  }

  /* title bar */
  .title {
    align-items: center;
    background: linear-gradient(#2a50b0 0 1px, #8cc0f0 2px, #6aa8e8 9px, #3a7ad0 12px, #2d61bb 22px, #2348a0);
    color: #fff;
    display: flex;
    gap: 4px;
    height: 26px;
    padding: 0 2px;
  }

  h1 {
    flex: 1;
    font: bold 12px/18px 'DejaVu Sans Condensed', sans-serif;
    text-shadow: 1px 1px 1px #14307c;
  }

  .title-buttons {
    display: flex;
    gap: 3px;
  }

  .title-buttons button {
    background: linear-gradient(#7fb2ea, #3a73cb 50%, #2c5fba);
    border: 1px solid #a9cdf5;
    border-radius: 3px;
    height: 20px;
    width: 20px;
  }

  .title-buttons .close {
    background: linear-gradient(#f2a28a, #e0583a 50%, #c83e20);
  }

  .title-buttons svg {
    stroke: #fff;
    stroke-width: 2;
  }

  /* menu */
  .menu {
    align-items: center;
    display: flex;
    height: 25px;
    padding-right: 4px;
  }

  .menu > button {
    padding: 0 7px 0 8px;
    white-space: nowrap;
  }

  .menu > .icon {
    margin-right: 1px;
  }

  .grip {
    background: repeating-linear-gradient(#a8a7ae 0 2px, transparent 2px 4px);
    height: 14px;
    margin: 0 2px 0 6px;
    width: 2px;
  }

  .menu > .grip {
    margin-right: 3px;
  }

  .ask {
    background: #fff;
    display: flex;
    height: 18px;
    margin-left: auto;
    width: 148px;
  }

  .ask input {
    flex: 1;
    min-width: 0;
    padding-left: 2px;
  }

  .ask input::placeholder {
    color: #a0a0a4;
    opacity: 1;
  }

  .child-buttons {
    display: flex;
    gap: 7px;
    margin-left: 5px;
  }

  .child-buttons button {
    width: 10px;
  }

  .child-buttons svg {
    stroke: #000;
  }

  /* toolbars */
  .toolbar {
    align-items: center;
    align-self: flex-start;
    background: linear-gradient(#fafafb, #f4f3f6 50%, #e6e4ea);
    border-radius: 4px;
    display: flex;
    height: 24px;
    margin-bottom: 2px;
  }

  .toolbar + .toolbar {
    margin-bottom: 1px;
  }

  .tool {
    align-items: center;
    display: flex;
    height: 22px;
    justify-content: center;
    width: 23px;
  }

  .tool.on {
    background: #dfe3ee;
    border: 1px solid #3560a8;
  }

  .theme {
    gap: 2px;
    width: 54px;
  }

  .drop {
    align-items: center;
    display: flex;
    height: 18px;
    padding-left: 1px;
    width: 11px;
  }

  .drop:disabled .caret {
    border-top-color: #aaa;
  }

  .sep {
    border-left: 1px solid #b9b8c0;
    box-sizing: border-box;
    height: 14px;
    margin-left: 2px;
    width: 4px;
  }

  .combo {
    align-items: center;
    background: #fff;
    box-sizing: border-box;
    display: flex;
    height: 18px;
    padding: 0 3px 0 2px;
  }

  .combo select {
    appearance: none;
    flex: 1;
    min-width: 0;
  }

  .font {
    margin-right: 2px;
    width: 118px;
  }

  .size {
    width: 74px;
  }

  .zoom {
    width: 56px;
  }

  .more {
    align-items: flex-end;
    background: linear-gradient(#c4c3c9, #95949c);
    border-radius: 0 4px 4px 0;
    display: flex;
    height: 24px;
    justify-content: center;
    margin-left: 2px;
    padding-bottom: 4px;
    width: 11px;
  }

  /* shapes pane */
  .workspace {
    display: flex;
    flex: 1;
    gap: 5px;
    min-height: 0;
    padding: 0 2px 0 3px;
  }

  .shapes {
    display: flex;
    flex-direction: column;
    padding-top: 3px;
    width: 189px;
  }

  .shapes-head {
    align-items: center;
    background: #f4f3f6;
    border-bottom: 1px solid #a9a6c0;
    display: flex;
    height: 21px;
    justify-content: space-between;
    padding: 0 5px;
  }

  .shapes-head h2 {
    font: bold 11px/14px 'DejaVu Sans Condensed', sans-serif;
  }

  .shapes-head svg {
    height: 9px;
    stroke: #000;
    stroke-width: 2;
    width: 9px;
  }

  .search {
    background: linear-gradient(#e9e8ef, #b8b5ca);
    height: 40px;
    padding: 8px 8px 0;
  }

  .search label {
    padding-left: 2px;
  }

  .search-row {
    display: flex;
  }

  .search input {
    background: #fff;
    height: 18px;
    width: 130px;
  }

  .xp {
    align-items: center;
    background: linear-gradient(90deg, #e3effc, #b4cdea);
    border: 1px solid #8ba7cd;
    border-radius: 2px;
    display: flex;
    flex: none;
    height: 17px;
    justify-content: center;
    width: 17px;
  }

  .chevron {
    height: 9px;
    stroke: #4a5a78;
    stroke-width: 2;
    width: 9px;
  }

  .down {
    rotate: 180deg;
  }

  .left {
    rotate: -90deg;
  }

  .right {
    rotate: 90deg;
  }

  .go {
    background: linear-gradient(135deg, #5cc04c, #0a8410);
    height: 18px;
    margin-left: 8px;
    width: 18px;
  }

  .go svg {
    stroke: #fff;
    stroke-width: 2;
  }

  .stencil {
    align-items: center;
    background: linear-gradient(#e8e7f0, #cac8d8);
    border-bottom: 1px solid #8c89ae;
    border-top: 1px solid #fff;
    display: flex;
    gap: 4px;
    height: 18px;
    padding-left: 3px;
  }

  .stencil svg {
    height: 12px;
    width: 10px;
  }

  .shapes-body {
    background: linear-gradient(90deg, #e9eaf5, #f8faff);
    display: flex;
    flex: 1;
  }

  .masters {
    align-content: start;
    display: grid;
    flex: 1;
    grid-auto-rows: 34px;
    grid-template-columns: 82px 82px;
    list-style: none;
    padding: 3px 0 0 7px;
  }

  .masters li {
    align-items: center;
    display: flex;
    font-size: 9px;
    gap: 3px;
    line-height: 11px;
  }

  .masters svg {
    height: 26px;
    width: 26px;
  }

  .masters svg :global(.num) {
    fill: #b8b8b8;
    font: 10px 'DejaVu Sans Condensed', sans-serif;
    text-anchor: middle;
  }

  .masters span {
    padding: 1px;
    white-space: nowrap;
  }

  .masters .on span {
    background: #ebe9ed;
    box-shadow: 0 0 0 1px #77757c;
    width: 45px;
  }

  /* scroll bars */
  .scroll {
    background: linear-gradient(90deg, #e6effc, #fbfdff);
    display: flex;
  }

  .vertical {
    flex-direction: column;
    width: 17px;
  }

  .shapes .vertical,
  .shapes .vertical .xp {
    width: 16px;
  }

  .track {
    display: flex;
    flex: 1;
    flex-direction: inherit;
    min-height: 0;
  }

  .thumb {
    background: repeating-linear-gradient(#7f98c0 0 1px, transparent 1px 2px) center / 7px 8px no-repeat,
      linear-gradient(90deg, #e8f2ff, #bcd4f0);
    border: 1px solid #7f9ec6;
    border-radius: 2px;
    box-sizing: border-box;
  }

  .whole {
    flex: 1;
  }

  .vertical .before {
    flex: 336;
  }

  .page {
    flex: 241;
  }

  .vertical .after {
    flex: 113;
  }

  .horizontal {
    background: linear-gradient(#e0edfb, #fcfdff);
    flex: 1;
  }

  .horizontal .before {
    flex: 189;
  }

  .horizontal .after {
    flex: 183;
  }

  .wide {
    background: repeating-linear-gradient(90deg, #7f98c0 0 1px, transparent 1px 2px) center / 8px 7px no-repeat,
      linear-gradient(#e4f0fe, #b8cfe8);
    flex: 207;
  }

  /* drawing window */
  .drawing {
    border-left: 1px solid #808080;
    border-top: 2px solid #88868e;
    display: grid;
    flex: 1;
    grid-template-columns: 16px 1fr 17px;
    grid-template-rows: 16px 1fr 17px;
    min-width: 0;
  }

  .corner {
    background: #fff;
    border-bottom: 1px solid #000;
    border-right: 1px solid #000;
    height: 15px;
    width: 15px;
  }

  .ruler {
    font: 9px 'DejaVu Sans Condensed', sans-serif;
    stroke: #8a8a8a;
  }

  .ruler rect {
    stroke: none;
  }

  .ruler text {
    fill: #000;
    stroke: none;
  }

  .top {
    border-bottom: 1px solid #000;
    height: 15px;
    width: 100%;
  }

  .side {
    border-right: 1px solid #000;
    height: 100%;
    min-height: 0;
    width: 15px;
  }

  .cursor-tick {
    stroke: #000;
    stroke-dasharray: 2 2;
  }

  .main-scroll {
    grid-column: 3;
    grid-row: 1 / 3;
  }

  .canvas {
    background: #8987a6;
    height: 100%;
    min-height: 0;
    overflow: hidden;
    width: 100%;
  }

  .grid {
    stroke: #bfbfbf;
  }

  .figures {
    fill: #fff;
    stroke: #000;
  }

  .figures .selected {
    fill: none;
    stroke: #0c0;
    stroke-dasharray: 3 3;
  }

  .mark {
    stroke: #00d;
  }

  .tabs {
    background: #dddbe4;
    display: flex;
    grid-column: 1 / 4;
    min-width: 0;
    padding-right: 17px;
  }

  .tab-nav {
    align-items: center;
    background: #f0eff3;
    display: flex;
    justify-content: space-around;
    width: 68px;
  }

  .tab-nav button {
    height: 9px;
    width: 9px;
  }

  .tab-nav svg {
    fill: #000;
  }

  .tab-list {
    background: #b5b3c8;
    border-top: 1px solid #8987a6;
    box-sizing: border-box;
    display: flex;
    overflow: hidden;
    width: 539px;
  }

  .tab {
    flex: none;
    height: 16px;
    padding: 1px 0 0 13px;
    position: relative;
    text-align: left;
    white-space: nowrap;
    width: 83px;
  }

  .tab:last-child {
    width: 41px;
  }

  .tab svg {
    height: 17px;
    left: 0;
    position: absolute;
    stroke: #7d7a9a;
    top: 0;
    width: 12px;
  }

  .tab.active {
    font-weight: bold;
    padding-left: 9px;
    z-index: 1;
  }

  .tab.active::before {
    background: #fff;
    clip-path: polygon(0 0, 100% 0, 83px 100%, 2px 100%);
    content: '';
    height: 16px;
    left: 0;
    position: absolute;
    top: 0;
    width: 95px;
  }

  .tab.active svg {
    display: none;
  }

  .tab span {
    position: relative;
  }

  .splitter {
    background: #ebe9ed;
    border-right: 1px solid #77757c;
    width: 2px;
  }

  /* status bar */
  .status {
    align-items: center;
    border-top: 1px solid #fff;
    box-sizing: border-box;
    display: flex;
    gap: 5px;
    height: 25px;
    padding: 3px 21px 0 3px;
  }

  .cell {
    border: 1px solid #bdbcc2;
    box-sizing: border-box;
    height: 17px;
    line-height: 16px;
    padding-left: 20px;
    width: 150px;
  }

  .cell:nth-child(3) {
    padding-left: 36px;
  }

  .page-no {
    margin-left: auto;
    padding: 0;
    text-align: center;
    width: 100px;
  }

  /* taskbar */
  .taskbar {
    align-items: center;
    background: linear-gradient(#23519e 0 1px, #7cbcf0 2px, #64a6e8 12px, #3373cc 15px, #2c5cb8 24px, #2450a8);
    color: #fff;
    display: flex;
    gap: 3px;
    height: 30px;
  }

  .start {
    align-items: center;
    align-self: stretch;
    background: linear-gradient(#4a7c4a 0 1px, #8ed68a 3px, #3fa23c 10px, #2a9a24 20px, #2cb824);
    border-radius: 0 8px 8px 0;
    box-shadow: 1px 0 2px #153c80;
    display: flex;
    font: italic bold 16px/20px 'Liberation Sans', sans-serif;
    margin-right: 6px;
    padding-left: 10px;
    text-shadow: 1px 1px 2px #143c10;
    width: 88px;
  }

  .start svg {
    height: 16px;
    width: 16px;
  }

  .task {
    align-items: center;
    background: linear-gradient(#76b0ee, #4c8ade 40%, #2f66c4 60%, #2f62bc);
    border: 1px solid #2b56ac;
    border-radius: 2px;
    display: flex;
    gap: 3px;
    height: 24px;
    padding: 2px 0 0 8px;
    white-space: nowrap;
    width: 157px;
  }

  .task.on {
    background: linear-gradient(#1c3678, #16388a 60%, #1c489c);
    border-color: #122860;
  }

  .tray {
    align-items: center;
    align-self: stretch;
    background: linear-gradient(#4a7cb8 0 1px, #f4f8fe 2px, #c8dcf4 13px, #8fb4e4 15px, #6c98d8);
    display: flex;
    gap: 2px;
    margin-left: auto;
    width: 112px;
  }

  .hide,
  .agent {
    align-items: center;
    border-radius: 50%;
    display: flex;
    height: 16px;
    justify-content: center;
    width: 16px;
  }

  .hide {
    background: linear-gradient(#f0f6ff, #a4c4ee);
    border: 1px solid #7390c0;
    margin-left: -8px;
  }

  .agent {
    background: #2d4c6e;
    font: bold 14px/14px 'Liberation Serif', serif;
  }

  .flag {
    height: 12px;
    width: 15px;
  }

  time {
    align-items: center;
    color: #00008b;
    display: flex;
    font: bold 16px/16px 'DejaVu Sans', sans-serif;
    gap: 1px;
    margin-left: 9px;
  }

  time span {
    display: flex;
    flex-direction: column;
    font-size: 11px;
    line-height: 10px;
  }

  time i {
    font-size: 9px;
  }
</style>
